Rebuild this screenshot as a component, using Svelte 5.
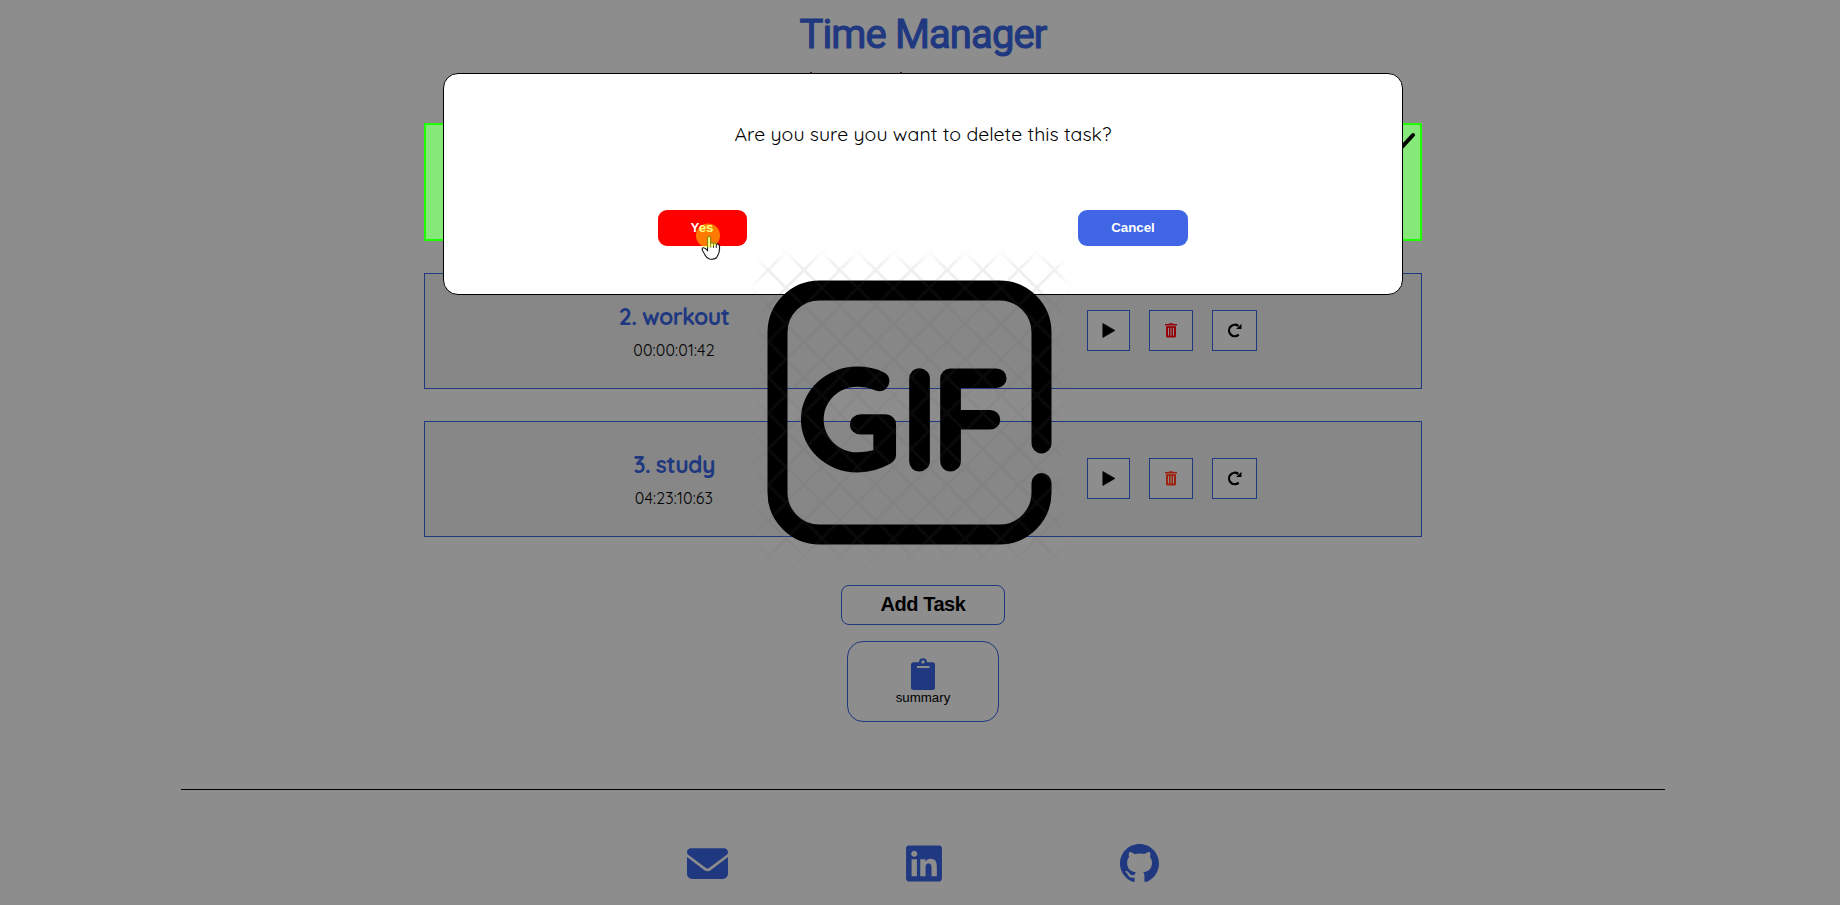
<script>
  const tasks = [
    { name: '2. workout', time: '00:00:01:42', trash: '#960008', nameGap: '-0.65px', timeGap: '0.15px' },
    { name: '3. study', time: '04:23:10:63', trash: '#a0200e', nameGap: '-0.6px', timeGap: '0.15px' }
  ];
</script>

<div class="page">
  <h1>Time Manager</h1>

  <main>
    <section class="card done">
      <svg class="check" width="22" height="18" viewBox="0 0 22 18"><path d="M2 11l5 5L19 3" /></svg>
    </section>
    {#each tasks as t}
      <section class="card">
        <div class="info">
          <h2 style="letter-spacing:{t.nameGap}">{t.name}</h2>
          <p style="letter-spacing:{t.timeGap}">{t.time}</p>
        </div>
        <div class="tools">
          <button class="play" aria-label="play"><svg width="13" height="15" viewBox="0 0 13 15"><path d="M.8.4L13 7.400L.8 14.600z" fill="#000" stroke="#000" stroke-width=".6" stroke-linejoin="round" /></svg></button>
          <button class="trash" aria-label="delete"><svg width="12" height="15" viewBox="0 0 12 15" fill={t.trash}><path d="M4.200 .3h3.600l.5.8H12v1.300H0V1.100h3.700zM1 3.300h10v9.800a1.300 1.300 0 0 1-1.300 1.300H2.300A1.300 1.300 0 0 1 1 13.100zM3 5v7.500h1V5zM5.500 5v7.500h1V5zM8 5v7.500h1V5z" fill-rule="evenodd" /></svg></button>
          <button class="redo" aria-label="reset"><svg width="15" height="15" viewBox="0 0 15 15"><path d="M11.700 11.600A5.700 5.700 0 1 1 11.300 3" fill="none" stroke="#000" stroke-width="2.300" /><path d="M14.500 .8v5.100H9.200z" /></svg></button>
        </div>
      </section>
    {/each}
  </main>

  <button class="add">Add Task</button>
  <button class="summary">
    <svg width="24" height="32" viewBox="0 0 24 32"><path fill-rule="evenodd" d="M8 4.200a4 4 0 0 1 8 0h5.500A2.500 2.500 0 0 1 24 6.700v22.800a2.500 2.500 0 0 1-2.500 2.500h-19A2.500 2.500 0 0 1 0 29.500V6.700a2.500 2.500 0 0 1 2.500-2.500zM12 2.200a1.700 1.700 0 1 0 0 3.400 1.700 1.700 0 0 0 0-3.400zM6 8v2h12.500V8z" /></svg>
    <span>summary</span>
  </button>

  <hr />
  <footer>
    <svg width="41" height="41" viewBox="0 0 512 512"><path d="M48 64C21.500 64 0 85.500 0 112c0 15.100 7.100 29.300 19.200 38.400L236.800 313.600c11.400 8.500 27 8.500 38.400 0L492.800 150.400c12.100-9.100 19.200-23.300 19.200-38.400c0-26.500-21.500-48-48-48H48zM0 176V384c0 35.300 28.700 64 64 64H448c35.300 0 64-28.700 64-64V176L294.400 339.200c-22.800 17.100-54 17.100-76.800 0L0 176z" /></svg>
    <svg width="36" height="41" viewBox="0 0 448 512"><path d="M416 32H31.900C14.300 32 0 46.500 0 64.300v383.400C0 465.500 14.300 480 31.900 480H416c17.600 0 32-14.500 32-32.300V64.300c0-17.800-14.400-32.300-32-32.300zM135.400 416H69V202.200h66.500V416zm-33.200-243c-21.300 0-38.500-17.300-38.500-38.500S80.900 96 102.200 96c21.200 0 38.500 17.300 38.500 38.500 0 21.300-17.200 38.500-38.500 38.500zm282.100 243h-66.400V312c0-24.800-.5-56.700-34.500-56.700-34.600 0-39.900 27-39.900 54.900V416h-66.400V202.200h63.700v29.200h.9c8.900-16.800 30.600-34.500 62.900-34.500 67.200 0 79.700 44.300 79.700 101.900V416z" /></svg>
    <svg width="39" height="41" viewBox="0 0 16 16"><path d="M8 0C3.580 0 0 3.580 0 8c0 3.540 2.290 6.530 5.470 7.590.4.07.55-.17.55-.38 0-.19-.01-.82-.01-1.490-2.010.37-2.530-.49-2.690-.94-.09-.23-.48-.94-.82-1.130-.28-.15-.68-.52-.01-.53.63-.01 1.080.58 1.230.82.72 1.210 1.870.87 2.330.66.07-.52.28-.87.51-1.070-1.780-.2-3.640-.89-3.640-3.950 0-.87.31-1.590.82-2.150-.08-.2-.36-1.020.08-2.120 0 0 .67-.21 2.200.82.64-.18 1.320-.27 2-.27s1.360.09 2 .27c1.530-1.040 2.200-.82 2.200-.82.44 1.100.16 1.920.08 2.120.51.56.82 1.270.82 2.150 0 3.070-1.870 3.750-3.650 3.950.29.25.54.73.54 1.480 0 1.070-.01 1.930-.01 2.200 0 .21.15.46.55.38A8.010 8.010 0 0 0 16 8c0-4.420-3.580-8-8-8" /></svg>
  </footer>
</div>

<div class="modal">
  <p>Are you sure you want to delete this task?</p>
  <div class="choices">
    <button class="yes">Yes</button>
    <button class="cancel">Cancel</button>
  </div>
</div>

<svg class="gif" width="340" height="330" viewBox="740 240 340 330">
  <defs>
    <pattern id="hatch" x="804" y="270" width="35.800" height="35.800" patternUnits="userSpaceOnUse">
      <path d="M-2 -2L37.800 37.800M37.800 -2L-2 37.800" stroke="#606060" stroke-width="2.800" />
    </pattern>
    <filter id="soft"><feGaussianBlur stdDeviation="7" /></filter>
    <mask id="fade"><rect x="758" y="259" width="305" height="300" rx="14" fill="#fff" filter="url(#soft)" /></mask>
  </defs>
  <path d="M1041.500 443.500V332.500a42 42 0 0 0-42-42H819.500a42 42 0 0 0-42 42V492.500a42 42 0 0 0 42 42H999.500a42 42 0 0 0 42-42V483" fill="none" stroke="#000" stroke-width="20" stroke-linecap="round" />
  <g class="letters">
    <text transform="translate(796.500 469.500) scale(1.060 1)">G</text>
    <text x="900" y="469.500">I</text>
    <text x="931" y="469.500">F</text>
  </g>
  <rect x="740" y="240" width="340" height="330" fill="url(#hatch)" mask="url(#fade)" opacity=".1" />
</svg>

<svg class="pointer" width="32" height="42" viewBox="696 222 32 42">
  <path d="M707.500 250.500V238.200q0-1.700 1.600-1.700t1.600 1.700v4.800q1.500-1 2.800.3 1.500-.8 2.800.6 2-.3 2.900 1.300.5 1 .4 3-.1 4-1.500 6.500-1 2-1.600 3-2.500 2-7 1.300-3-1-4.500-4-1.500-3-2.500-4.500-.8-2 .5-2.700 1.800-.5 4.500 2.700z" fill="#fff" stroke="#111" stroke-width="1.100" />
  <path d="M710.700 242.500v5M713.500 243.300v4.500M716.300 244v4" stroke="#111" stroke-width=".9" />
  <circle cx="708" cy="235.500" r="12" fill="rgba(255,255,0,.48)" />
</svg>

<style>
  :global(body) { margin: 0; background: #8d8d8d; overflow: hidden; }
  .page { box-sizing: border-box; width: 1840px; height: 905px; padding-left: 6px; display: flex; flex-direction: column; align-items: center; color: #000; overflow: hidden; }
  .page::before { content: ""; position: absolute; left: 810px; top: 72px; width: 2px; height: 1px; background: #401828; box-shadow: 90px 0 #401828; }
  h1 { margin: 11px 0 0; height: 112px; font: 400 40px/47px Roboto, sans-serif; letter-spacing: -.88px; color: #203880; -webkit-text-stroke: 1.100px #203880; }
  main { width: 998px; display: flex; flex-direction: column; gap: 32px; }
  .card { box-sizing: border-box; height: 116px; border: 1px solid #203880; background: #878787; display: grid; grid-template-columns: 1fr 1fr; place-items: center; }
  .done { height: 118px; border: 2px solid #1eff00; background: #85e878; display: flex; justify-content: flex-end; align-items: flex-start; }
  .check { margin: 7px 4px 0 0; fill: none; stroke: #000; stroke-width: 4; stroke-linecap: round; }
  .info { text-align: center; height: 114px; }
  h2 { margin: 28px 0 0; font: 700 23px/30px Quicksand, Lato, sans-serif; color: #203880; }
  .info p { margin: 8px 0 0; font: 400 16px/20px Quicksand, Lato, sans-serif; }
  .tools { display: flex; gap: 19px; padding-bottom: 1px; }
  button { box-sizing: border-box; padding: 0; margin: 0; font-family: "Liberation Sans", sans-serif; }
  .tools button { height: 41px; border: 1px solid #203880; background: #8d8d8d; display: grid; place-items: center; }
  .play { width: 43px; }
  .trash { width: 44px; }
  .redo { width: 45px; }
  .add { margin-top: 48px; width: 164px; height: 40px; padding-bottom: 2px; border: 1px solid #203880; border-radius: 8px; background: transparent; font-weight: 700; font-size: 20px; letter-spacing: -.45px; color: #000; }
  .summary { margin-top: 16px; width: 152px; height: 81px; border: 1px solid #203880; border-radius: 16px; background: transparent; display: flex; flex-direction: column; align-items: center; padding-top: 16px; font-size: 13.300px; line-height: 16px; color: #000; }
  .summary svg { fill: #203880; }
  hr { width: 1484px; height: 1px; margin: 67px 0 0; border: 0; background: #000; flex: none; }
  footer { width: 472px; margin-top: 52.500px; display: flex; justify-content: space-between; fill: #203880; }
  .modal { position: absolute; box-sizing: border-box; left: 443px; top: 73px; width: 960px; height: 222px; border: 1px solid #000; border-radius: 15px; background: #fff; color: #000; text-align: center; }
  .modal p { margin: 47px 0 0; font: 400 19.500px/26px Quicksand, Lato, sans-serif; letter-spacing: .02px; }
  .choices { margin-top: 63px; display: flex; justify-content: center; gap: 331px; }
  .choices button { height: 36px; padding-bottom: 1px; border: 0; border-radius: 9px; color: #fff; font-size: 13.300px; font-weight: 700; }
  .choices .yes { width: 89px; padding-right: 1px; background: #f00; }
  .choices .cancel { width: 110px; background: #4066e6; }
  .gif { position: absolute; left: 740px; top: 240px; }
  .letters { font: 700 142px Quicksand, sans-serif; fill: #000; stroke: #000; stroke-width: 3px; stroke-linejoin: round; }
  .pointer { position: absolute; left: 696px; top: 222px; }
</style>
